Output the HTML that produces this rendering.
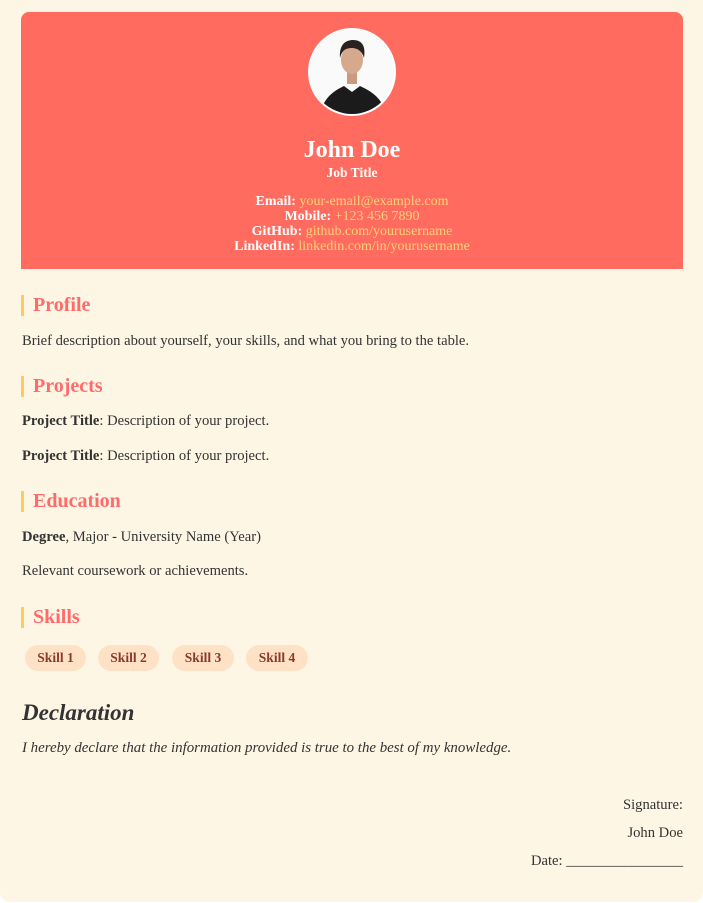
<!DOCTYPE html>
<html><head><style>
html,body{margin:0;padding:0;background:#fff;}
body{width:703px;height:903px;position:relative;overflow:hidden;font-family:"Liberation Serif","DejaVu Serif",serif;color:#333;}
.page{position:absolute;left:0;top:0;width:703px;height:902px;background:#fdf6e4;border-radius:0 0 10px 10px;}
.hdr{position:absolute;left:21px;top:12px;width:662px;height:257px;background:#ff6b5e;border-radius:8px 8px 0 0;color:#fff;text-align:center;}
.av{position:absolute;left:287px;top:16px;width:84px;height:84px;border-radius:50%;border:2px solid #fff;background:#fff;overflow:hidden;}
.t{position:absolute;left:0;right:0;white-space:nowrap;}
a{color:#ffd27a;text-decoration:none;font-weight:normal;}
.h{position:absolute;left:21px;border-left:3px solid #ffc95e;padding-left:9px;color:#ff6b6b;font-weight:bold;font-size:20px;line-height:20px;height:21px;}
.p{position:absolute;left:22px;font-size:14.6px;line-height:16px;white-space:nowrap;}
.pill{position:absolute;top:645px;height:26px;line-height:26px;background:#ffe2c6;border-radius:13px;text-align:center;color:#8a3a28;font-weight:bold;font-size:13.5px;}
.r{position:absolute;right:20px;font-size:14.6px;line-height:16px;white-space:nowrap;}
</style></head><body>
<div class="page">
<div class="hdr">
 <div class="av"><svg width="84" height="84" viewBox="0 0 84 84">
  <rect width="84" height="84" fill="#fafafa"/>
  <path d="M10 84 C14 66 26 60 34 56 L42 62 L50 56 C58 60 72 66 76 84Z" fill="#1b1b1b"/>
  <rect x="37" y="40" width="10" height="14" fill="#c99a80"/>
  <ellipse cx="42" cy="30" rx="11" ry="14" fill="#d7a98c"/>
  <path d="M30 28 C29 14 36 10 43 10 C52 10 56 16 54 28 C52 20 46 18 42 18 C36 18 32 20 30 28Z" fill="#2a2220"/>
 </svg></div>
 <div class="t" style="top:125px;font-size:24px;font-weight:bold;line-height:26px;">John Doe</div>
 <div class="t" style="top:153px;font-size:13.5px;line-height:16px;font-weight:bold;">Job Title</div>
 <div class="t" style="top:182px;font-size:14px;line-height:15px;font-weight:bold;">Email: <a>your-email@example.com</a><br>Mobile: <a>+123 456 7890</a><br>GitHub: <a>github.com/yourusername</a><br>LinkedIn: <a>linkedin.com/in/yourusername</a></div>
</div>
<div class="h" style="top:295px">Profile</div>
<div class="p" style="top:333px">Brief description about yourself, your skills, and what you bring to the table.</div>
<div class="h" style="top:376px">Projects</div>
<div class="p" style="top:413px"><b>Project Title</b>: Description of your project.</div>
<div class="p" style="top:448px"><b>Project Title</b>: Description of your project.</div>
<div class="h" style="top:491px">Education</div>
<div class="p" style="top:529px"><b>Degree</b>, Major - University Name (Year)</div>
<div class="p" style="top:563px">Relevant coursework or achievements.</div>
<div class="h" style="top:607px">Skills</div>
<div class="pill" style="left:25px;width:61px">Skill 1</div>
<div class="pill" style="left:98px;width:61px">Skill 2</div>
<div class="pill" style="left:172px;width:62px">Skill 3</div>
<div class="pill" style="left:246px;width:62px">Skill 4</div>
<div class="p" style="top:700px;font-size:23px;line-height:26px;font-weight:bold;font-style:italic;">Declaration</div>
<div class="p" style="top:740px;font-style:italic;font-size:14.9px;">I hereby declare that the information provided is true to the best of my knowledge.</div>
<div class="r" style="top:797px">Signature:</div>
<div class="r" style="top:825px">John Doe</div>
<div class="r" style="top:853px">Date: ________________</div>
</div>
</body></html>
